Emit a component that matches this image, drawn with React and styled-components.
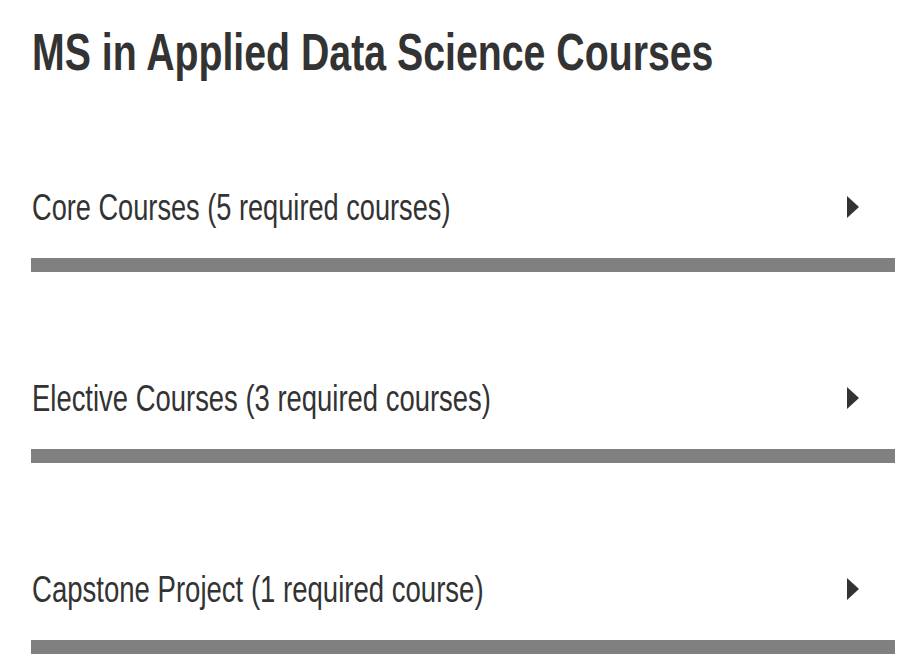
import React from "react";
import styled, { createGlobalStyle } from "styled-components";

const Global = createGlobalStyle`
  html, body { margin: 0; padding: 0; background: #fff; }
  body { font-family: "Liberation Sans", Arial, sans-serif; color: #333; }
`;

const Page = styled.main`
  padding: 26px 0 0 31px;
  width: 864px;
`;

const Title = styled.h1`
  margin: 0;
  font-size: 52px;
  line-height: 52px;
  font-weight: 700;
  color: #333;
  padding-left: 1px;
  white-space: nowrap;
`;

const Condensed = styled.span`
  display: inline-block;
  transform: scaleX(${(p) => p.$scale});
  transform-origin: left center;
  white-space: nowrap;
`;

const List = styled.div`
  margin-top: 76px;
  display: flex;
  flex-direction: column;
  gap: 73px;
`;

const Header = styled.button`
  all: unset;
  box-sizing: border-box;
  display: flex;
  align-items: center;
  justify-content: space-between;
  width: 100%;
  height: 118px;
  border-bottom: 14px solid #808080;
  padding: 4px 36px 0 1px;
  cursor: pointer;
`;

const Label = styled.span`
  font-size: 36px;
  line-height: 36px;
  color: #333;
`;

const Arrow = styled.span`
  width: 0;
  height: 0;
  margin-top: -3px;
  border-top: 11px solid transparent;
  border-bottom: 11px solid transparent;
  border-left: 12px solid #333;
`;

const items = [
  { t: "Core Courses (5 required courses)", s: 0.755 },
  { t: "Elective Courses (3 required courses)", s: 0.762 },
  { t: "Capstone Project (1 required course)", s: 0.765 },
];

export default function App() {
  return (
    <>
      <Global />
      <Page>
        <Title>
          <Condensed $scale={0.755}>MS in Applied Data Science Courses</Condensed>
        </Title>
        <List>
          {items.map(({ t, s }) => (
            <Header key={t}>
              <Label>
                <Condensed $scale={s}>{t}</Condensed>
              </Label>
              <Arrow />
            </Header>
          ))}
        </List>
      </Page>
    </>
  );
}
